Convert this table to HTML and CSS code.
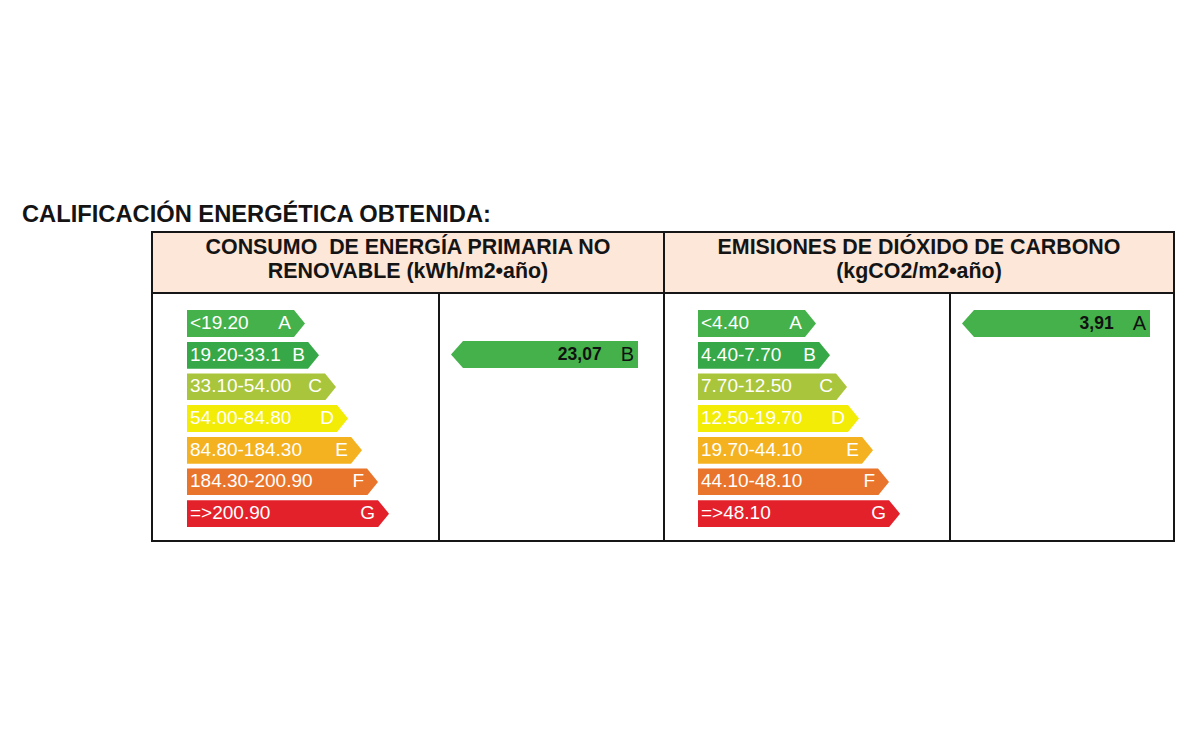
FILE: index.html
```html
<!DOCTYPE html>
<html lang="es">
<head>
<meta charset="utf-8">
<title>Calificación energética</title>
<link rel="stylesheet" href="styles.css">
</head>
<body>
<div class="page">
  <h1 class="title">CALIFICACIÓN ENERGÉTICA OBTENIDA:</h1>
  <div class="table">
    <div class="head head-left">CONSUMO&nbsp; DE ENERGÍA PRIMARIA NO<br>RENOVABLE (kWh/m2•año)</div>
    <div class="head head-right">EMISIONES DE DIÓXIDO DE CARBONO<br>(kgCO2/m2•año)</div>

    <div class="cell scale scale-left">
      <div class="bar a"><span>&lt;19.20</span><span>A</span></div>
      <div class="bar b"><span>19.20-33.1</span><span>B</span></div>
      <div class="bar c"><span>33.10-54.00</span><span>C</span></div>
      <div class="bar d"><span>54.00-84.80</span><span>D</span></div>
      <div class="bar e"><span>84.80-184.30</span><span>E</span></div>
      <div class="bar f"><span>184.30-200.90</span><span>F</span></div>
      <div class="bar g"><span>=&gt;200.90</span><span>G</span></div>
    </div>
    <div class="cell result result-b">
      <div class="res"><span class="val">23,07</span><span class="let">B</span></div>
    </div>

    <div class="cell scale scale-right">
      <div class="bar a"><span>&lt;4.40</span><span>A</span></div>
      <div class="bar b"><span>4.40-7.70</span><span>B</span></div>
      <div class="bar c"><span>7.70-12.50</span><span>C</span></div>
      <div class="bar d"><span>12.50-19.70</span><span>D</span></div>
      <div class="bar e"><span>19.70-44.10</span><span>E</span></div>
      <div class="bar f"><span>44.10-48.10</span><span>F</span></div>
      <div class="bar g"><span>=&gt;48.10</span><span>G</span></div>
    </div>
    <div class="cell result result-a">
      <div class="res wide"><span class="val">3,91</span><span class="let">A</span></div>
    </div>
  </div>
</div>
</body>
</html>
```

FILE: styles.css
```css
html, body {
  margin: 0;
  padding: 0;
  background: #ffffff;
}

.page {
  width: 1200px;
  height: 750px;
  padding-top: 201px;
  box-sizing: border-box;
  font-family: "Liberation Sans", Arial, sans-serif;
  color: #141414;
}

.title {
  margin: 0 0 3px 22px;
  font-size: 23.7px;
  line-height: 27px;
  font-weight: bold;
  color: #141414;
}

.table {
  margin-left: 151px;
  width: 1024px;
  border: 2px solid #161616;
  box-sizing: border-box;
  display: grid;
  grid-template-columns: 285px 225px 286px 224px;
  grid-template-rows: 61px 246px;
}

.head {
  grid-column: span 2;
  background: #fce7d9;
  border-bottom: 2px solid #161616;
  text-align: center;
  font-weight: bold;
  font-size: 21.4px;
  line-height: 23.5px;
  padding-top: 3px;
  box-sizing: border-box;
}

.head-right {
  border-left: 2px solid #161616;
}

.cell {
  box-sizing: border-box;
}

.scale {
  display: flex;
  flex-direction: column;
  gap: 4.7px;
  padding-top: 16px;
  padding-left: 34px;
}

.scale-right {
  border-left: 2px solid #161616;
  padding-left: 33px;
}

.result {
  border-left: 2px solid #161616;
  padding-left: 11px;
}

.result-b {
  padding-top: 47px;
}

.result-a {
  padding-top: 16px;
}

.bar {
  height: 27px;
  display: flex;
  justify-content: space-between;
  align-items: center;
  padding: 0 14px 1px 3px;
  box-sizing: border-box;
  color: #ffffff;
  font-size: 19px;
  line-height: 26px;
  clip-path: polygon(0 0, calc(100% - 11px) 0, 100% 50%, calc(100% - 11px) 100%, 0 100%);
}

.bar.a { width: 118px; background: #45b14a; }
.bar.b { width: 132px; background: #37a847; }
.bar.c { width: 149px; background: #a9c53b; }
.bar.d { width: 161px; background: #f3ec06; }
.bar.e { width: 175px; background: #f4b221; }
.bar.f { width: 191px; background: #e9742b; }
.bar.g { width: 202px; background: #e3212b; }

.res {
  width: 187px;
  height: 27px;
  background: #45b14a;
  display: flex;
  justify-content: flex-end;
  align-items: center;
  gap: 19px;
  padding: 0 4px 1px 0;
  box-sizing: border-box;
  color: #111111;
  clip-path: polygon(12px 0, 100% 0, 100% 100%, 12px 100%, 0 50%);
}

.res.wide {
  width: 188px;
}

.val {
  font-weight: bold;
  font-size: 17.5px;
}

.let {
  font-size: 20px;
}
```
